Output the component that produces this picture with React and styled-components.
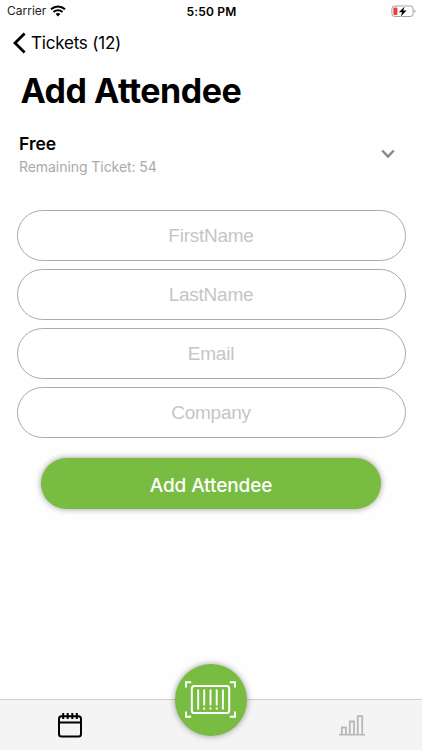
import React from "react";
import styled, { createGlobalStyle } from "styled-components";

const fields = ["FirstName", "LastName", "Email", "Company"];

const App = () => {
  return (
    <>
      <GlobalStyle />
      <Screen>
        <StatusBar>
          <Carrier>
            <span>Carrier</span>
            <WifiIcon />
          </Carrier>
          <Clock>5:50 PM</Clock>
          <BatteryIcon />
        </StatusBar>
        <BackLink>
          <svg width="13" height="22" viewBox="0 0 13 22" fill="none">
            <path d="M11.6 1.4L2 11l9.6 9.6" stroke="#000" strokeWidth="2.8" />
          </svg>
          <span>Tickets (12)</span>
        </BackLink>
        <Title>Add Attendee</Title>
        <TicketRow>
          <div>
            <TicketName>Free</TicketName>
            <Remaining>Remaining Ticket: 54</Remaining>
          </div>
          <svg width="14" height="12" viewBox="0 0 14 12" fill="none">
            <path d="M1.2 1.5L7 7.5l5.8-6" stroke="#858587" strokeWidth="2.3" />
          </svg>
        </TicketRow>
        <Form>
          {fields.map((name) => (
            <Field key={name} placeholder={name} />
          ))}
          <Submit type="button">Add Attendee</Submit>
        </Form>
        <TabBar>
          <Tab>
            <CalendarIcon />
          </Tab>
          <Tab>
            <ScanButton type="button">
              <BarcodeIcon />
            </ScanButton>
          </Tab>
          <Tab>
            <ChartIcon />
          </Tab>
        </TabBar>
      </Screen>
    </>
  );
};

const WifiIcon = () => (
  <svg width="16" height="12" viewBox="0 0 16 12" fill="none" stroke="#000">
    <path d="M1 4.3C5 .5 11 .5 15 4.3" strokeWidth="2.1" />
    <path d="M3.5 7C6 4.7 10 4.7 12.5 7" strokeWidth="2" />
    <path d="M8 11.5L5.6 9C7 7.8 9 7.8 10.4 9z" fill="#000" stroke="none" />
  </svg>
);

const BatteryIcon = () => (
  <svg width="25" height="13" viewBox="0 0 25 13" fill="none">
    <rect x="0.9" y="1" width="21.2" height="10.5" rx="2.8" stroke="#a2a2a4" />
    <path d="M23.5 4.8c1.3.5 1.3 2.4 0 2.9z" fill="#8a8a8c" />
    <rect x="2.4" y="2.5" width="4" height="7.5" rx="1" fill="#f8392f" />
    <path
      d="M13.6 1.4L7.8 7.2h3.3l-1.3 4.2 5.8-5.9h-3.3z"
      fill="#000"
      stroke="#fff"
      strokeWidth="1.2"
      paintOrder="stroke"
    />
  </svg>
);

const CalendarIcon = () => (
  <svg width="24" height="25" viewBox="0 0 24 25" fill="none" stroke="#000">
    <rect x="1" y="3.3" width="22" height="20.2" rx="2.5" strokeWidth="2" />
    <path d="M1 9.5h22" strokeWidth="2" />
    <path d="M5.2 0v6M9.7 0v6M14.3 0v6M18.8 0v6" strokeWidth="2" />
  </svg>
);

const BarcodeIcon = () => (
  <svg width="51" height="37" viewBox="0 0 51 37" fill="none" stroke="#fff">
    <path
      d="M1 6.5V1.2h5.2M44.8 1.2H50v5.3M50 30.5v5.3h-5.2M6.2 35.8H1v-5.3"
      strokeWidth="2"
    />
    <rect x="6.8" y="5" width="37.4" height="27" rx="2.5" strokeWidth="2" />
    <path
      d="M13.2 8.5v20M19.2 8.5v16M25.5 8.5v16M31.7 8.5v16M37.9 8.5v20M19.2 26.5v2M25.5 26.5v2M31.7 26.5v2"
      strokeWidth="1.9"
    />
  </svg>
);

const ChartIcon = () => (
  <svg width="26" height="21" viewBox="0 0 26 21" fill="none" stroke="#b8b8ba">
    <path d="M0 19.7h26" strokeWidth="1.6" />
    <path
      d="M2.8 19.5v-7H7v7M10.8 19.5v-13H15v13M18.8 19.5V1.2h4.4v18.3"
      strokeWidth="1.8"
    />
  </svg>
);

const GlobalStyle = createGlobalStyle`
  * {
    box-sizing: border-box;
  }
  body {
    margin: 0;
    background: #fff;
    font-family: Inter, "Liberation Sans", sans-serif;
  }
`;

const Screen = styled.main`
  display: flex;
  flex-direction: column;
  width: 422px;
  height: 750px;
  background: #fefefe;
  color: #000;
`;

const StatusBar = styled.header`
  display: grid;
  grid-template-columns: 1fr auto 1fr;
  align-items: center;
  height: 22px;
  padding: 0 6px 0 7px;

  > svg {
    justify-self: end;
  }
`;

const Carrier = styled.div`
  display: flex;
  align-items: center;
  gap: 4px;
  font-size: 12px;
  line-height: 22px;
  color: #222;
`;

const Clock = styled.span`
  font-size: 12px;
  font-weight: 600;
  letter-spacing: 0.2px;
`;

const BackLink = styled.nav`
  display: flex;
  align-items: center;
  gap: 5px;
  height: 42px;
  padding-left: 13px;
  font-size: 17px;
  letter-spacing: -0.2px;
`;

const Title = styled.h1`
  margin: 5px 0 0 20.5px;
  font-size: 34px;
  font-weight: 700;
  line-height: 43px;
  letter-spacing: -0.5px;
`;

const TicketRow = styled.section`
  display: flex;
  align-items: center;
  justify-content: space-between;
  height: 50px;
  margin-top: 18px;
  padding: 0 27px 0 19px;
`;

const TicketName = styled.h2`
  margin: 0;
  font-size: 17.5px;
  font-weight: 600;
  line-height: 22px;
`;

const Remaining = styled.p`
  margin: 0;
  color: #aaa;
  font-size: 14px;
  line-height: 23px;
  letter-spacing: -0.06px;
`;

const Form = styled.form`
  display: flex;
  flex-direction: column;
  gap: 8px;
  margin-top: 30px;
  padding: 0 16.5px;
`;

const Field = styled.input`
  width: 100%;
  height: 51px;
  padding: 0 24px;
  border: 1px solid #aaa;
  border-radius: 26px;
  background: #fff;
  font-family: "Liberation Sans", Arial, sans-serif;
  font-size: 19px;
  letter-spacing: -0.25px;
  text-align: center;
  outline: none;

  &::placeholder {
    color: #c5c5c8;
    opacity: 1;
  }
`;

const Submit = styled.button`
  height: 51px;
  margin: 12px 24.5px 0;
  padding: 3px 0 0;
  border: 0;
  border-radius: 26px;
  background: #78bc42;
  box-shadow: 0 0 6px rgba(0, 0, 0, 0.4);
  color: #fff;
  font-family: inherit;
  font-size: 19px;
  font-weight: 500;
  letter-spacing: -0.1px;
`;

const TabBar = styled.footer`
  display: grid;
  grid-template-columns: repeat(3, 1fr);
  align-items: center;
  height: 51px;
  margin-top: auto;
  border-top: 1px solid #cfcecf;
  background: #f5f4f5;
`;

const Tab = styled.div`
  display: flex;
  justify-content: center;
`;

const ScanButton = styled.button`
  display: flex;
  align-items: center;
  justify-content: center;
  width: 72px;
  height: 72px;
  margin-top: -51px;
  padding: 0;
  border: 0;
  border-radius: 50%;
  background: #78bc42;
  box-shadow: 0 0 6px rgba(0, 0, 0, 0.4);
`;

export default App;
